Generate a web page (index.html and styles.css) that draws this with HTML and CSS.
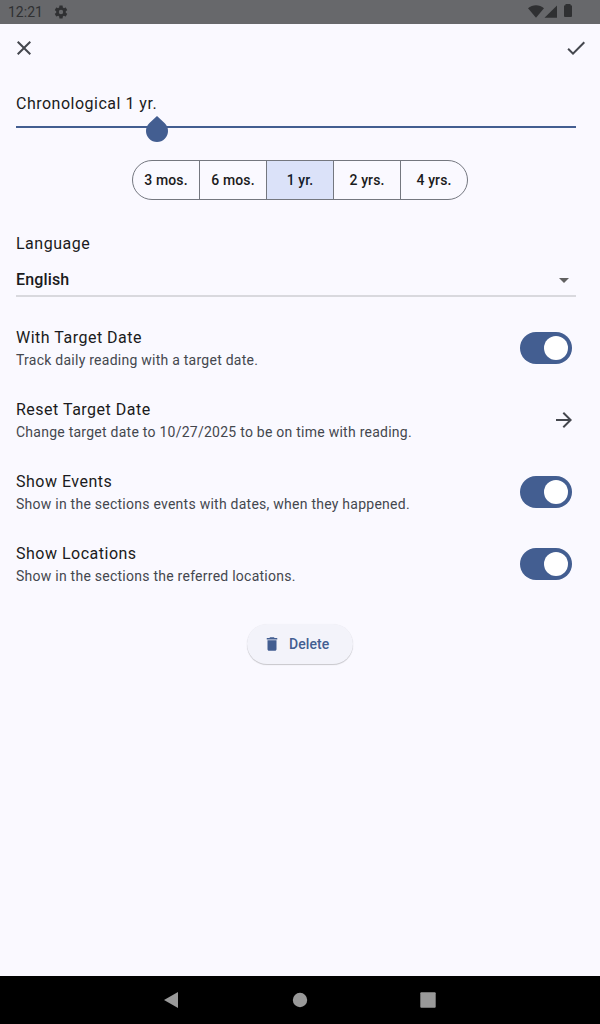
FILE: index.html
```html
<!DOCTYPE html>
<html lang="en">
<head>
<meta charset="utf-8">
<title>Reading plan settings</title>
<link rel="stylesheet" href="styles.css">
</head>
<body>
<div class="screen">
  <div class="status-bar">
    <span class="clock">12:21</span>
    <svg class="gear" width="16" height="16" viewBox="0 0 24 24"><path fill-rule="evenodd" d="M19.14 12.94c.04-.3.06-.61.06-.94 0-.32-.02-.64-.07-.94l2.03-1.58c.18-.14.23-.41.12-.61l-1.92-3.32c-.12-.22-.37-.29-.59-.22l-2.39.96c-.5-.38-1.03-.7-1.62-.94l-.36-2.54c-.04-.24-.24-.41-.48-.41h-3.84c-.24 0-.43.17-.47.41l-.36 2.54c-.59.24-1.13.57-1.62.94l-2.39-.96c-.22-.08-.47 0-.59.22L2.74 8.87c-.12.21-.08.47.12.61l2.03 1.58c-.05.3-.09.63-.09.94s.02.64.07.94l-2.03 1.58c-.18.14-.23.41-.12.61l1.92 3.32c.12.22.37.29.59.22l2.39-.96c.5.38 1.03.7 1.62.94l.36 2.54c.05.24.24.41.48.41h3.84c.24 0 .44-.17.47-.41l.36-2.54c.59-.24 1.13-.56 1.62-.94l2.39.96c.22.08.47 0 .59-.22l1.92-3.32c.12-.22.07-.47-.12-.61zM12 15.3A3.3 3.3 0 1 1 12 8.700a3.300 3.300 0 0 1 0 6.600z"/></svg>
    <svg class="signals" width="48" height="24" viewBox="0 0 48 24"><path d="M8 17.800 0 8.200C4.400 4.100 11.600 4.100 16 8.200z"/><path d="M16.500 17.800 29 5.400v12.400z"/><path d="M37.500 4h5v1.200H43a1 1 0 0 1 1 1V16a1 1 0 0 1-1 1h-6a1 1 0 0 1-1-1V6.200a1 1 0 0 1 1-1h.5z"/></svg>
  </div>
  <header class="app-bar">
    <svg width="24" height="24" viewBox="0 0 24 24"><path d="M19 6.410 17.590 5 12 10.590 6.410 5 5 6.410 10.590 12 5 17.590 6.410 19 12 13.410 17.590 19 19 17.590 13.410 12z"/></svg>
    <svg width="24" height="24" viewBox="0 0 24 24"><path d="M9 16.170 4.830 12l-1.420 1.410L9 19 21 7l-1.410-1.410z"/></svg>
  </header>
  <main class="form">
    <div class="name-field">
      <span>Chronological 1 yr.</span>
      <svg class="text-handle" width="22" height="27" viewBox="0 0 22 27"><path d="M11 0 18.780 7.220A11 11 0 1 1 3.220 7.220z"/></svg>
    </div>
    <div class="segments">
      <span>3 mos.</span><span>6 mos.</span><span class="selected">1 yr.</span><span>2 yrs.</span><span>4 yrs.</span>
    </div>
    <div class="field-label">Language</div>
    <div class="dropdown">
      <span>English</span>
      <svg width="24" height="24" viewBox="0 0 24 24"><path d="m7 10 5 5 5-5z"/></svg>
    </div>
    <div class="options">
      <div class="option">
        <div><div class="title">With Target Date</div><div class="detail">Track daily reading with a target date.</div></div>
        <div class="switch"></div>
      </div>
      <div class="option">
        <div><div class="title">Reset Target Date</div><div class="detail">Change target date to 10/27/2025 to be on time with reading.</div></div>
        <svg class="arrow" width="24" height="24" viewBox="0 0 24 24"><path d="m12 4-1.410 1.410L16.170 11H4v2h12.170l-5.580 5.590L12 20l8-8z"/></svg>
      </div>
      <div class="option">
        <div><div class="title">Show Events</div><div class="detail">Show in the sections events with dates, when they happened.</div></div>
        <div class="switch"></div>
      </div>
      <div class="option">
        <div><div class="title">Show Locations</div><div class="detail">Show in the sections the referred locations.</div></div>
        <div class="switch"></div>
      </div>
    </div>
    <div class="delete">
      <svg width="18" height="18" viewBox="0 0 24 24"><path d="M6 19c0 1.100.9 2 2 2h8c1.100 0 2-.9 2-2V7H6zM19 4h-3.500l-1-1h-5l-1 1H5v2h14z"/></svg>
      <span>Delete</span>
    </div>
  </main>
  <nav class="nav-bar">
    <svg width="24" height="24" viewBox="0 0 24 24"><path d="M18 4v16L4 12z"/></svg>
    <svg width="24" height="24" viewBox="0 0 24 24"><circle cx="12" cy="12" r="7.200"/></svg>
    <svg width="24" height="24" viewBox="0 0 24 24"><rect x="4.300" y="4.300" width="15.400" height="15.400" rx="1"/></svg>
  </nav>
</div>
</body>
</html>
```

FILE: styles.css
```css
* { box-sizing: border-box; }
body { margin: 0; font-family: Roboto, sans-serif; color: #1a1b20; }
svg { display: block; flex: none; }
.screen { width: 600px; height: 1024px; display: flex; flex-direction: column; background: #faf9ff; }

.status-bar { height: 24px; display: flex; align-items: center; padding: 0 24px 0 8px; background: #67686b; color: #2f3032; }
.status-bar svg { fill: #2f3032; }
.clock { font-size: 14px; line-height: 24px; }
.gear { margin-left: 10px; }
.signals { margin-left: auto; }

.app-bar { height: 48px; display: flex; align-items: center; justify-content: space-between; padding: 0 12px; fill: #44474e; }

.form { flex: 1; padding: 20px 24px 0 16px; }
.name-field { position: relative; height: 36px; border-bottom: 2px solid #435e91; font-size: 16px; line-height: 24px; letter-spacing: .5px; }
.text-handle { position: absolute; left: 130px; top: 24px; fill: #435e91; }

.segments { width: 336px; height: 40px; margin: 32px 0 0 116px; display: grid; grid-template-columns: 66px repeat(4, 67px); border: 1px solid #74777f; border-radius: 20px; overflow: hidden; }
.segments span { display: flex; align-items: center; justify-content: center; font-size: 14px; font-weight: 500; letter-spacing: .1px; border-left: 1px solid #74777f; }
.segments span:first-child { border-left: 0; }
.segments .selected { background: #dbe2f9; color: #141b2c; }

.field-label { margin-top: 32px; font-size: 16px; line-height: 24px; letter-spacing: .5px; }
.dropdown { height: 41px; display: flex; justify-content: space-between; padding-top: 12px; border-bottom: 2px solid #d9d9de; font-size: 16px; font-weight: 500; line-height: 24px; letter-spacing: .15px; }
.dropdown svg { fill: #616161; }

.options { padding-top: 15px; }
.option { height: 72px; display: flex; align-items: center; justify-content: space-between; padding-right: 4px; }
.title { font-size: 16px; line-height: 24px; letter-spacing: .5px; }
.detail { font-size: 14px; line-height: 20px; letter-spacing: .25px; color: #44474e; }
.switch { width: 52px; height: 32px; padding: 4px; border-radius: 16px; background: #435e91; }
.switch::after { content: ""; display: block; width: 24px; height: 24px; margin-left: 20px; border-radius: 50%; background: #fff; }
.arrow { margin-right: -4px; fill: #44474e; }

.delete { width: 106px; height: 40px; margin: 24px 0 0 231px; display: flex; align-items: center; gap: 8px; padding-left: 16px; border-radius: 20px; background: #f3f3fa; color: #435e91; fill: #435e91; font-size: 14px; font-weight: 500; letter-spacing: .1px; box-shadow: 0 1px 1px rgba(0,0,0,.2), 0 0 1px rgba(0,0,0,.06); }

.nav-bar { height: 48px; display: flex; align-items: center; justify-content: center; gap: 104px; background: #000; fill: #999; }
```
